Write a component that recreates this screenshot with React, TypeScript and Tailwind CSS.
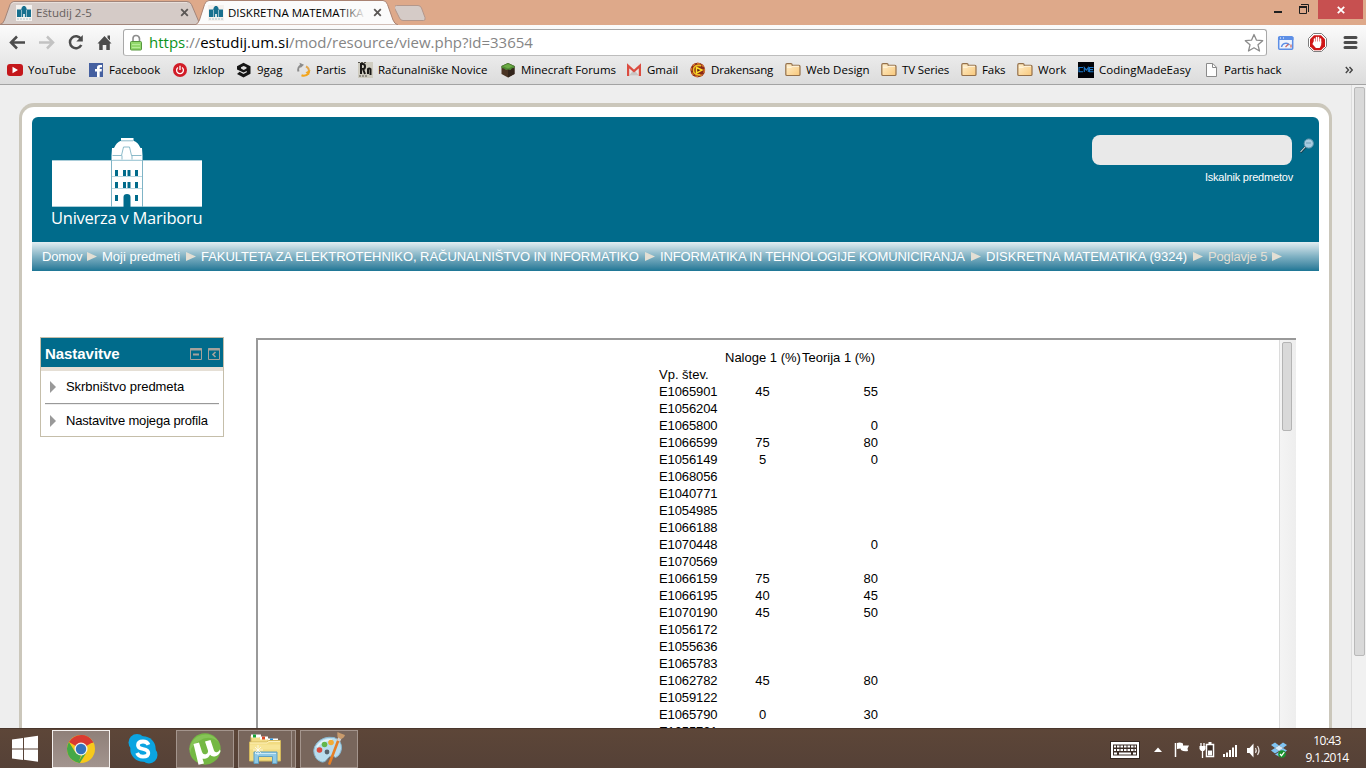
import type { ReactNode } from "react";

const rows: [string, string, string][] = [
  ["E1065901", "45", "55"],
  ["E1056204", "", ""],
  ["E1065800", "", "0"],
  ["E1066599", "75", "80"],
  ["E1056149", "5", "0"],
  ["E1068056", "", ""],
  ["E1040771", "", ""],
  ["E1054985", "", ""],
  ["E1066188", "", ""],
  ["E1070448", "", "0"],
  ["E1070569", "", ""],
  ["E1066159", "75", "80"],
  ["E1066195", "40", "45"],
  ["E1070190", "45", "50"],
  ["E1056172", "", ""],
  ["E1055636", "", ""],
  ["E1065783", "", ""],
  ["E1062782", "45", "80"],
  ["E1059122", "", ""],
  ["E1065790", "0", "30"],
  ["E1055731", "", ""],
];

function Favicon() {
  return (
    <svg width="16" height="16" viewBox="0 0 16 16" className="shrink-0">
      <rect width="16" height="16" fill="#f4f1ee" />
      <path d="M1 4.500h4.500V3L7 1h2l1.500 2v1.500H15V12H1z" fill="#17708f" />
      <path d="M5.500 5v7M10.500 5v7" stroke="#8fb9c8" />
      <path d="M7 9h2v3H7z" fill="#cfe2e8" />
      <path d="M1 14h14" stroke="#a9c3cc" strokeDasharray="2 1" />
    </svg>
  );
}

function TabClose() {
  return (
    <svg width="9" height="9" viewBox="0 0 9 9" className="shrink-0">
      <path d="M1.200 1.200l6.600 6.600M7.800 1.200l-6.600 6.600" stroke="#5a5654" strokeWidth="1.800" />
    </svg>
  );
}

function Folder() {
  return (
    <svg width="16" height="16" viewBox="0 0 16 16">
      <defs>
        <linearGradient id="fold" x1="0" y1="0" x2="1" y2="1">
          <stop offset="0" stopColor="#fff0cf" />
          <stop offset="1" stopColor="#f8c779" />
        </linearGradient>
      </defs>
      <path d="M.800 12.500V3Q.800 1.600 2 1.600h4Q7 1.600 7.300 3.400h6.500q1.200 0 1.200 1.200v7.900q0 1-1.200 1H2q-1.200 0-1.200-1z" fill="url(#fold)" stroke="#94704a" strokeWidth="1.200" />
      <path d="M2 5.200h4.500l1-1H14" stroke="#fff8e6" fill="none" />
    </svg>
  );
}

const bookmarks: { label: string; box: string; text: string; icon: ReactNode }[] = [
  {
    label: "YouTube", box: "w-[82px]", text: "ml-[5px] tracking-[0.1px]",
    icon: <svg width="16" height="16"><rect y="2" width="16" height="12" rx="3" fill="#c4171b" /><path d="M5.500 4.800v6.400l5.500-3.200z" fill="#fff" /></svg>,
  },
  {
    label: "Facebook", box: "w-[84px]", text: "ml-[4px]",
    icon: <svg width="16" height="16"><rect y="1" x="0" width="14" height="14" fill="#4560a0" /><path d="M8 15V9.500H6V7h2V5.500Q8 3 10.500 3H13v2.300h-1.500q-.8 0-.8.900V7h2.200l-.3 2.500h-1.900V15z" fill="#fff" /></svg>,
  },
  {
    label: "Izklop", box: "w-[63px]", text: "ml-[4px]",
    icon: <svg width="16" height="16"><circle cx="7" cy="8" r="7" fill="#d11c27" /><path d="M5 5.500a3.400 3.400 0 1 0 4 0M7 3.800V8" stroke="#fff" strokeWidth="1.300" fill="none" /></svg>,
  },
  {
    label: "9gag", box: "w-[60px]", text: "ml-[5px]",
    icon: <svg width="16" height="16"><path d="M1 4.200L7.500 .700 14.500 4.200v7.600L7.500 15.500 1 12l2.600-2.300 3.900 2.200 3.300-1.700V9L7.500 10.500 1 7.500z" fill="#161616" /><path d="M5 5.200l2.700-1.300 2.800 1.300v1.400L7.700 8 5 6.600z" fill="#dedede" /></svg>,
  },
  {
    label: "Partis", box: "w-[62px]", text: "ml-[4px] tracking-[-0.1px]",
    icon: <svg width="16" height="16" fill="none" strokeWidth="2"><path d="M2.500 9.500A5 5 0 0 1 5 3.300" stroke="#8b8b8b" /><path d="M3.500 0.800L8 2.700 4.600 6" fill="#8b8b8b" /><path d="M10 4.500a4.500 4.500 0 0 1 2.500 6" stroke="#e3a64b" /><path d="M5.500 13.300q4 1.600 6.800-1.800" stroke="#f2a51d" /><path d="M14.500 8l-1.500 5-3.500-2.800z" fill="#f2a51d" /></svg>,
  },
  {
    label: "Računalniške Novice", box: "w-[143px]", text: "ml-[4px]",
    icon: <svg width="16" height="16"><rect width="15" height="16" fill="#cfccc0" /><path d="M3 12V2h2q2 0 2 2.500T5 7l2 5M10 12V6.500m0 .700q1.200-1.500 2.500 0V13" stroke="#1c1a18" strokeWidth="2" fill="none" /><path d="M0 .500h8M1 14h8" stroke="#56534c" strokeDasharray="2 1" /></svg>,
  },
  {
    label: "Minecraft Forums", box: "w-[126px]", text: "ml-[4px]",
    icon: <svg width="16" height="16"><path d="M.500 4L7 1l6.500 3v8L7 15.500 .500 12z" fill="#4a3424" /><path d="M7 7.300l6.500-3.300v8L7 15.500z" fill="#33251c" /><path d="M.500 4L7 1l6.500 3v2L11 6.300 9.500 8 7 7.500 5 8 3 6.500.500 6z" fill="#4f8a35" /><path d="M2 4.300L7 2l5 2.200L7 6.500z" fill="#6cab45" /></svg>,
  },
  {
    label: "Gmail", box: "w-[63px]", text: "ml-[5px]",
    icon: <svg width="15" height="16"><path d="M0 3h14v11H0z" fill="#e9e7e5" /><path d="M2 13.500l5-6 5 6z" fill="#c9c5c3" /><path d="M1.100 14V3.800L7 9l5.900-5.200V14" stroke="#db4c40" strokeWidth="2.200" fill="none" /></svg>,
  },
  {
    label: "Drakensang", box: "w-[95px]", text: "ml-[5px] tracking-[-0.2px]",
    icon: <svg width="16" height="16"><circle cx="7.800" cy="8" r="7.300" fill="#8b2a17" /><circle cx="7.800" cy="8" r="6.600" fill="none" stroke="#d1702f" strokeWidth="1.500" strokeDasharray="3 2" /><path d="M11 3.600Q3.500 2.500 3.500 8t7 4.800" stroke="#f0c021" strokeWidth="1.600" fill="none" /><path d="M6.500 5.500l5.500 2.600-5.500 3z" fill="#5d1a10" stroke="#ffe229" strokeWidth="1.500" /></svg>,
  },
  { label: "Web Design", box: "w-[96px]", text: "ml-[5px]", icon: <Folder /> },
  { label: "TV Series", box: "w-[80px]", text: "ml-[5px] tracking-[-0.15px]", icon: <Folder /> },
  { label: "Faks", box: "w-[56px]", text: "ml-[5px] tracking-[-0.1px]", icon: <Folder /> },
  { label: "Work", box: "w-[61px]", text: "ml-[5px]", icon: <Folder /> },
  {
    label: "CodingMadeEasy", box: "w-[127px]", text: "ml-[5px]",
    icon: <svg width="16" height="16"><rect width="16" height="16" fill="#020308" /><path d="M5 5.500H1v4.200h4M6.300 10V5.500l2 2.500 2-2.500V10M15.500 5.500h-4v4.200h4M11.500 7.600h3.500" stroke="#1d78c8" strokeWidth="1.100" fill="none" /></svg>,
  },
  {
    label: "Partis hack", box: "w-[100px]", text: "ml-[3px] tracking-[-0.1px]",
    icon: <svg width="16" height="16"><path d="M1.500 1.500h6.300l3.700 3.800v9.200h-10z" fill="#fdfdfd" stroke="#8a8a8a" /><path d="M7.500 1.500v4h4" stroke="#8a8a8a" fill="none" /></svg>,
  },
];

function TitleBar() {
  return (
    <div className="flex h-[25px] shrink-0 bg-[#dea98a]">
      <div className="relative h-[25px] w-[196px]">
        <svg width="202" height="25" className="absolute left-0 top-0">
          <path d="M0 24.500Q3 24 4.500 20L10 4.500Q11.500 1.500 14 1.500H187Q190 1.500 191.500 4.500L200 24.500z" fill="#d5cbc7" stroke="#a2857a" />
          <path d="M11.500 4.500Q12.500 2.500 14 2.500H187" stroke="#e8dfda" fill="none" />
        </svg>
        <div className="relative flex h-[25px] items-center pl-4">
          <Favicon />
          <span className="ml-1 w-[144px] text-[#66605d]">Eštudij 2-5</span>
          <TabClose />
        </div>
      </div>
      <div className="relative h-[25px] w-[199px]">
        <svg width="203" height="25" className="absolute left-0 top-0">
          <path d="M-1 25Q2 24 3.500 20L8.500 4.500Q10 .500 13 .500H187Q190 .500 191.500 4.500L197 20Q198.500 24 202 25z" fill="#fbfbfb" stroke="#a98373" />
        </svg>
        <div className="relative flex h-[25px] items-center pl-[12px]">
          <Favicon />
          <span className="relative ml-[4px] w-[138px] overflow-hidden whitespace-nowrap text-black">
            DISKRETNA MATEMATIKA
            <span className="absolute inset-y-0 right-0 w-[26px] bg-linear-to-r from-transparent to-[#fbfbfb]" />
          </span>
          <span className="ml-[7px] flex"><TabClose /></span>
        </div>
      </div>
      <svg width="34" height="25">
        <path d="M1.500 5.500H23Q25.500 5.500 26.500 8L30 17.500Q30.800 20.500 28.500 20.500H8Q5.500 20.500 4.500 18L-.500 8Q-1 5.500 1.500 5.500z" fill="#d5cbc7" stroke="#b3978b" />
      </svg>
      <div className="ml-auto flex">
        <svg width="62" height="19">
          <path d="M18 12h8" stroke="#1f1f1f" strokeWidth="2" />
          <path d="M43.500 6.500h7v7h-7z" stroke="#1f1f1f" fill="none" />
          <path d="M43 7h8" stroke="#1f1f1f" strokeWidth="2" />
          <path d="M45 4.500h7.500V12" stroke="#1f1f1f" fill="none" />
        </svg>
        <div className="mr-[3px] flex h-[19px] w-[45px] items-center justify-center bg-[#c75050]">
          <svg width="8" height="8"><path d="M.800 .800l6.400 6.400M7.200 .800L.800 7.200" stroke="#fff" strokeWidth="1.800" /></svg>
        </div>
      </div>
    </div>
  );
}

function AddressRow() {
  return (
    <div className="flex h-[35px] items-center">
      <svg width="123" height="35" fill="none">
        <path d="M25 17.500H11.500M17 11.500l-6 6 6 6" stroke="#4c4c4c" strokeWidth="2.500" />
        <path d="M39 17.500h13.500M47 11.500l6 6-6 6" stroke="#c2c2c2" strokeWidth="2.500" />
        <path d="M81 14a6 6 0 1 0 .3 6" stroke="#4c4c4c" strokeWidth="2.500" />
        <path d="M82.800 10v6.500h-6.500z" fill="#4c4c4c" />
        <path d="M97.500 18.500l7-7.500 7 7.500h-1.700V25h-3.500v-5h-3.600v5h-3.500v-6.500zM107.500 10.500h2.500v5l-2.500-2.500z" fill="#4c4c4c" />
      </svg>
      <div className="flex h-[27px] w-[1144px] items-center rounded-[3px] border border-[#a8a8a8] border-b-[#bdbdbd] bg-white">
        <svg width="14" height="18" className="ml-[6px]">
          <path d="M3 9V4.500Q3 1.500 6 1.500T9.500 4.500V9" stroke="#8d8d8d" strokeWidth="1.600" fill="none" />
          <rect x=".500" y="7.500" width="11" height="8.500" rx="1" fill="#92d86c" stroke="#57963f" />
          <path d="M2 10.500h8M2 13.500h8" stroke="#b6ec98" />
        </svg>
        <span className="ml-[5px] text-[15px] leading-none text-[#858585]">
          <span className="text-[#0c931c]">https</span>://<span className="text-black">estudij.um.si</span>/mod/resource/view.php?id=33654
        </span>
        <svg width="20" height="20" className="ml-auto mr-[2px]">
          <path d="M10 1.500l2.500 5.700 6.200.500-4.700 4.100 1.500 6.200L10 14.800 4.500 18 6 11.800 1.300 7.700l6.200-.500z" fill="#fff" stroke="#8c8c8c" strokeWidth="1.300" strokeLinejoin="round" />
        </svg>
      </div>
      <svg width="99" height="35">
        <rect x="11.700" y="11.700" width="14" height="12.600" rx="1" fill="#eef4fd" stroke="#5d8fe6" strokeWidth="1.500" />
        <path d="M11 13.500h15.500" stroke="#5d8fe6" strokeWidth="3" />
        <path d="M13 13h1M16 13h1" stroke="#fff" />
        <path d="M14.500 22a4.500 4.500 0 0 1 8-2" stroke="#5d8fe6" strokeWidth="1.500" fill="none" />
        <path d="M18.500 22l3-3M24 19.500v3" stroke="#c96b6b" strokeWidth="1.300" />
        <path d="M46.500 8.500h8l5 5v8l-5 5h-8l-5-5v-8z" fill="#fff" stroke="#7d7d7d" />
        <path d="M47 10.200h7l4 4v7l-4 4h-7l-4-4v-7z" fill="#cf1717" />
        <path d="M47.500 14v4M49.500 12.500v5M51.500 12.500v5M53.500 14V18" stroke="#fff" strokeWidth="1.500" strokeLinecap="round" />
        <path d="M46.700 16.500h7.500V20l-1.500 3h-3.800l-3.500-4z" fill="#fff" />
        <path d="M78 12.500h11M78 17.500h11M78 22.500h11" stroke="#4c4c4c" strokeWidth="3" strokeLinecap="round" />
      </svg>
    </div>
  );
}

function Logo() {
  const cols = [65, 73, 77.5, 85];
  return (
    <svg width="160" height="72" viewBox="2 0 160 72" className="block">
      <path d="M2 24h150v47H2z" fill="#fff" />
      <path d="M61.500 24v-4.500l.5-7.500h2q2.500-6 7-7.300V2h12.500v2.700q4.500 1.300 7 7.300H92l.5 7.500V24z" fill="#fff" />
      <path d="M71 4.800h12M62.500 19.500h9l2-8.500h6l2 8.500h10M63 24.300h28M72 19.500v4M82 19.500v4" stroke="#6fa9bd" fill="none" strokeWidth=".800" />
      <path d="M2 24.500h150M2 70.500h150" stroke="#a9cdd9" />
      <path d="M61.500 24v47M92.500 24v47" stroke="#7fb4c6" />
      <path d="M62 40.500h30M62 52.500h30" stroke="#b9d8e2" />
      {cols.map((x) => (
        <path key={x} d={`M${x} 34h3v6h-3zM${x} 46h3v6h-3z`} fill="#006b8b" />
      ))}
      <path d="M65 59h3v6h-3zM85 59h3v6h-3zM73.500 71V61q0-3 3.500-3t3.500 3v10z" fill="#006b8b" />
    </svg>
  );
}

const crumbs: [string, string, string][] = [
  ["Domov", "w-[60px] pr-[5px]", "tracking-[-0.2px] text-white"],
  ["Moji predmeti", "w-[99px] pr-[5px]", "text-white"],
  ["FAKULTETA ZA ELEKTROTEHNIKO, RAČUNALNIŠTVO IN INFORMATIKO", "w-[459px] pr-[5px]", "tracking-[-0.05px] text-white"],
  ["INFORMATIKA IN TEHNOLOGIJE KOMUNICIRANJA", "w-[326px] pr-[5px]", "tracking-[-0.13px] text-white"],
  ["DISKRETNA MATEMATIKA (9324)", "w-[222px] pr-[5px]", "tracking-[0.03px] text-white"],
  ["Poglavje 5", "w-[74px]", "tracking-[-0.15px] text-[#e3dfd4]"],
];

function SidebarBlock() {
  return (
    <div className="ml-[18px] h-[100px] w-[184px] border border-[#c5beaa]">
      <div className="flex h-[29px] items-center bg-[#006b8b] pl-1 pr-[3px] pt-[3px]">
        <span className="-mt-[2px] text-[15px] font-bold leading-none tracking-[-0.05px] text-white">Nastavitve</span>
        <svg width="30" height="12" fill="none" stroke="#a5a29c" className="ml-auto">
          <path d="M.500 .500h11v11H.500zM18.500 .500h11v11h-11z" />
          <path d="M0 1.500h12M18 1.500h12M3 6.500h6" strokeWidth="2" />
          <path d="M25.500 4l-2.500 2.500 2.500 2.500" strokeWidth="1.600" />
        </svg>
      </div>
      <div className="h-1 bg-[#e5dfd5]" />
      <div className="flex h-[32px] items-center pl-[9px]">
        <svg width="6" height="12"><path d="M0 0l6 6-6 6z" fill="#999" /></svg>
        <span className="ml-[10px] tracking-[-0.05px]">Skrbništvo predmeta</span>
      </div>
      <div className="mx-1 h-[2px] border-t border-[#999] bg-[#eee]" />
      <div className="flex h-[31px] items-center pl-[9px]">
        <svg width="6" height="12"><path d="M0 0l6 6-6 6z" fill="#999" /></svg>
        <span className="ml-[10px] mt-px whitespace-nowrap tracking-[-0.17px]">Nastavitve mojega profila</span>
      </div>
    </div>
  );
}

function Taskbar() {
  const button = "flex h-[38px] items-center justify-center border";
  return (
    <div className="flex h-10 shrink-0 items-center border-t border-[#4a372d] bg-linear-to-b from-[#5d4638] to-[#554137] font-['Open_Sans',sans-serif] text-white">
      <svg width="52" height="38">
        <path d="M12 9.500l11-1.600v10.600H12zM24 7.800l14-2v12.700H24zM12 19.500h11v10.600l-11-1.600zM24 19.500h14v12.300l-14-2z" fill="#fff" />
      </svg>
      <div className={`${button} w-[58px] border-[#f3efed] bg-linear-to-b from-[#8f8079] to-[#a2948e]`}>
        <svg width="30" height="30" viewBox="0 0 30 30">
          <circle cx="15" cy="15" r="14" fill="#f7c91b" />
          <path d="M15 15L2.900 8A14 14 0 0 1 27.100 8z" fill="#d93a31" />
          <path d="M15 1a14 14 0 0 1 12.300 7.700H15z" fill="#d93a31" />
          <path d="M2.900 8L9.500 18.500 15 21.500l-2.500 7.300A14 14 0 0 1 2.900 8z" fill="#45a847" />
          <path d="M20.500 18.500L13.800 29 12 28.700l4.500-8z" fill="#45a847" />
          <circle cx="15" cy="15" r="6.500" fill="#f1f1ee" />
          <circle cx="15" cy="15" r="5.200" fill="#3373bd" />
        </svg>
      </div>
      <svg width="30" height="32" viewBox="0 0 30 32" className="mx-[18px]">
        <circle cx="9" cy="9.500" r="8.500" fill="#0ba4e1" />
        <circle cx="21" cy="22" r="8.500" fill="#0ba4e1" />
        <circle cx="15" cy="16" r="12.700" fill="#0ba4e1" />
        <path d="M20.500 11.800Q19 8.500 15 8.500q-5 0-5 3.700 0 2.900 5 3.800 5.300 1 5.300 4 0 3.600-5.300 3.600-4.300 0-6-3.600" stroke="#fff" strokeWidth="3.800" fill="none" />
      </svg>
      <div className={`${button} w-[58px] border-[#a4958d] bg-[#78665c]`}>
        <svg width="32" height="34" viewBox="0 0 32 34">
          <circle cx="16" cy="17" r="15.700" fill="#74b843" />
          <path d="M.500 17a16 16 0 0 1 29.500-7q-10-8-20-1T2 21z" fill="#86c457" />
          <path d="M4.500 12l5.500-1.500 3 9.500q1 3 3.800 2.200 3-1 2-4.200L16 9.500 21.500 8l3.500 10.500q.800 2.500 3.500 1.500 2-1 2.300-2.500l.700 1.500q-1 4-5 5.200-3.500 1-5.500-1.500-1.500 3.500-5 4-1.300.300-2.500 0L15 31.500l-5.500 1.200z" fill="#fff" />
        </svg>
      </div>
      <div className={`${button} ml-1 w-[54px] border-[#a4958d] bg-[#78665c]`}>
        <svg width="34" height="32" viewBox="0 0 34 32">
          <path d="M3 6V3h8l1 2h8v2h10v8H3z" fill="#f3dd86" stroke="#cfb65b" />
          <path d="M3 3h10" stroke="#fff" strokeWidth="3" />
          <path d="M5 3h3" stroke="#16a334" strokeWidth="3" />
          <path d="M12 5h8" stroke="#fff" strokeWidth="3" />
          <path d="M14 5h3" stroke="#dc4b26" strokeWidth="3" />
          <path d="M20 7h10" stroke="#fff" strokeWidth="3" />
          <path d="M22 7h3" stroke="#2493e0" strokeWidth="3" />
          <path d="M1.500 9h17l2-1.500h12V28h-31z" fill="#f2dc82" stroke="#d3b95c" />
          <path d="M2 10h17l2-1.500h11" stroke="#fff2bd" fill="none" />
          <path d="M2 14h30" stroke="#f7e596" strokeWidth="5" />
          <path d="M6 19h23v11.500h-4.500v-7h-14v7H6z" fill="#8ec9e6" stroke="#5f9fc0" />
          <path d="M7 20.500h21" stroke="#cdeaf5" />
          <path d="M10 12v10M5 17h10M7 14l6 6M13 14l-6 6" stroke="#fff" strokeWidth=".700" />
        </svg>
      </div>
      <div className="h-[38px] w-[4px] border-y border-r border-[#a4958d] bg-[#78665c]" />
      <div className={`${button} ml-1 w-[58px] border-[#a4958d] bg-[#78665c]`}>
        <svg width="34" height="34" viewBox="0 0 34 34">
          <path d="M4 26Q-1 18 5 11T22 5.500q8 3 7.500 11-1 7-6 9-4-4-8 1-3 5-7 3T4 26z" fill="#b9ddee" stroke="#86b6cf" />
          <path d="M5 15q5-8 15-7" stroke="#e2f4fb" strokeWidth="2" fill="none" />
          <circle cx="7.500" cy="18" r="2.800" fill="#dc4a3d" />
          <circle cx="12.500" cy="12.500" r="2.800" fill="#62b64b" />
          <circle cx="19" cy="10.500" r="2.800" fill="#f2ac35" />
          <circle cx="15" cy="20" r="2.400" fill="#56636c" />
          <path d="M27 6.500L17.500 31.500" stroke="#e57f26" strokeWidth="2.600" strokeLinecap="round" />
          <path d="M26.500 9l1.500-3.500" stroke="#d0d0d0" strokeWidth="3.500" />
          <path d="M25.500 5Q25 2 25.500 0q3 1.500 7.500 3-1 3.500-4.500 4z" fill="#c99b6c" />
        </svg>
      </div>
      <div className="ml-auto flex items-center">
        <svg width="189" height="38">
          <rect x="2.500" y="11.500" width="29" height="17" fill="#fff" stroke="#33261f" />
          <path d="M5 14.500h24v11H5z" fill="#3b2d26" />
          <path d="M6 16.500h22M6 20h22M6 23.500h3M11 23.500h12M25 23.500h3" stroke="#fff" strokeWidth="2.200" />
          <path d="M8.500 15v6.500M12 15v6.500M15.500 15v6.500M19 15v6.500M22.500 15v6.500M26 15v6.500" stroke="#3b2d26" />
          <path d="M46 22l4-4.500 4 4.500z" fill="#fff" />
          <path d="M67.500 13v14" stroke="#fff" strokeWidth="1.500" />
          <path d="M69 13q3-1 6 .500v2h6l-1.500 3 .500 2.500q-4 1-7-1l-.500-1.500-3.500.500z" fill="#fff" />
          <rect x="98.500" y="14.500" width="7" height="12" stroke="#fff" strokeWidth="1.500" fill="#3b2d26" />
          <path d="M100.500 13h3" stroke="#fff" strokeWidth="2" />
          <path d="M100 20.500h4v5h-4z" fill="#fff" />
          <path d="M93 13v3M96 13v3M94.500 20v8" stroke="#fff" strokeWidth="1.300" />
          <path d="M91.500 16h6v3l-1.500 2h-3l-1.500-2z" fill="#fff" />
          <path d="M115 24h2v3h-2zM118 22.500h2V27h-2zM121 20h2v7h-2zM124 17.500h2V27h-2zM127 15h2v12h-2z" fill="#fff" />
          <path d="M139 18h2.500l4-4.500v14l-4-4.500H139z" fill="#fff" />
          <path d="M147.500 18q1.500 2.500 0 5M149.500 16q3 4.500 0 9" stroke="#e7e1de" fill="none" strokeWidth="1.200" />
          <path d="M163 15l4-2.500 4 3-4 2.500zM171 15.500l4-3 4 2.500-4 3zM163 20.500l4-2.500 4 3-4 2.500zM171 21l4-3 4 2.500-4 3zM167 24.500l4-2.500 3 2-3 2.500z" fill="#7fc4f3" />
          <path d="M167 18l4-2.500 4 2.500-4 3z" fill="#d6ecfb" />
          <circle cx="174" cy="24" r="3.800" fill="#18922c" />
          <path d="M172 24l1.500 1.700 2.800-3.500" stroke="#fff" strokeWidth="1.200" fill="none" />
        </svg>
        <div className="mr-[9px] flex w-[60px] flex-col items-center text-[12px] leading-[17px]">
          <span className="tracking-[-0.6px]">10:43</span>
          <span className="tracking-[-0.55px]">9.1.2014</span>
        </div>
      </div>
    </div>
  );
}

export default function App() {
  return (
    <div className="flex h-[768px] w-[1366px] flex-col overflow-hidden font-['Open_Sans',sans-serif] text-[11.5px]">
      <TitleBar />
      <div className="flex h-[60px] shrink-0 flex-col border-b border-[#a3a3a3] bg-linear-to-b from-[#fbfbfb] to-[#dcdcdc]">
        <AddressRow />
        <div className="flex h-[20px] items-center pl-[7px] text-black">
          {bookmarks.map((b) => (
            <div key={b.label} className={`flex shrink-0 items-center whitespace-nowrap ${b.box}`}>
              {b.icon}
              <span className={b.text}>{b.label}</span>
            </div>
          ))}
          <svg width="8" height="8" className="ml-auto mr-[13px]"><path d="M.800 1l2.700 3-2.700 3M4.500 1l2.700 3-2.700 3" stroke="#444" strokeWidth="1.400" fill="none" /></svg>
        </div>
      </div>

      <div className="flex min-h-0 flex-1 bg-[#eee] font-['Liberation_Sans',sans-serif] text-[13px] text-black">
        <div className="flex w-[1351px] pl-[19px] pt-[18px]">
          <div className="w-[1313px] overflow-hidden rounded-t-[15px] border-x-[3px] border-t-4 border-[#cbc7bb] bg-white pt-[10px]">
            <div className="ml-[10px] flex h-[125px] w-[1287px] justify-between rounded-t-[6px] bg-[#006b8b]">
              <div className="flex flex-col pl-[20px] pt-[19px]">
                <Logo />
                <span className="-ml-px text-[16.5px] leading-[20px] tracking-[-0.25px] text-white font-['Open_Sans',sans-serif]">Univerza v Mariboru</span>
              </div>
              <div className="flex pr-[5px] pt-[18px]">
                <div className="flex flex-col items-end">
                  <div className="h-[30px] w-[200px] rounded-[8px] bg-[#e9e9e9]" />
                  <span className="-mr-px mt-[5px] text-[11px] leading-[14px] tracking-[-0.2px] text-white">Iskalnik predmetov</span>
                </div>
                <svg width="14" height="16" className="ml-[8px] mt-[3px]">
                  <path d="M.500 14.500L6 8.500" stroke="#173f4e" strokeWidth="2.400" />
                  <path d="M.500 14L6 8" stroke="#cfdde2" strokeWidth="1.100" />
                  <circle cx="8.800" cy="5.500" r="4.600" fill="#a9cbe0" stroke="#5e94ab" />
                  <path d="M6 5h5" stroke="#6f9fb6" />
                </svg>
              </div>
            </div>
            <div className="ml-[10px] flex h-[29px] w-[1287px] items-center bg-linear-to-b from-[#e3eef2] via-[#7fb1c3] to-[#1b7695] pl-[10px]">
              {crumbs.map(([label, box, text]) => (
                <div key={label} className={`flex shrink-0 items-center justify-between whitespace-nowrap ${box}`}>
                  <span className={text}>{label}</span>
                  <svg width="10" height="9"><path d="M0 0l10 4.500L0 9z" fill="#e3dfd4" /></svg>
                </div>
              ))}
            </div>
            <div className="flex pt-[66px]">
              <SidebarBlock />
              <div className="ml-[32px] mt-px flex h-[500px] w-[1040px] border-l-2 border-t-2 border-[#999] bg-white">
                <div className="flex flex-1 pl-[401px] pt-[9px]">
                  <div className="flex w-[219px] flex-col leading-[17px]">
                    <div className="flex whitespace-nowrap pl-[66px]">
                      <span className="w-[77px]">Naloge 1 (%)</span>
                      <span>Teorija 1 (%)</span>
                    </div>
                    <span>Vp. štev.</span>
                    {rows.map(([id, a, b]) => (
                      <div key={id} className="flex">
                        <span className="w-[66px] tracking-[-0.1px]">{id}</span>
                        <span className="w-[75px] text-center">{a}</span>
                        <span className="flex-1 text-right">{b}</span>
                      </div>
                    ))}
                  </div>
                </div>
                <div className="w-[17px] border-l border-[#dcdcdc] bg-linear-to-r from-[#f4f4f4] to-[#eee] pl-[2px] pt-[2px]">
                  <div className="h-[89px] w-[10px] rounded-[2px] border border-[#b4b4b4] bg-[#d9d9d9]" />
                </div>
              </div>
            </div>
          </div>
        </div>
        <div className="flex w-[15px] flex-col border-l border-[#dcdcdc] bg-[#f1f1f1] pl-[2px] pt-[2px]">
          <div className="h-[569px] w-[11px] rounded-[2px] border border-[#b9b9b9] bg-[#d9d9d9]" />
        </div>
      </div>
      <Taskbar />
    </div>
  );
}
